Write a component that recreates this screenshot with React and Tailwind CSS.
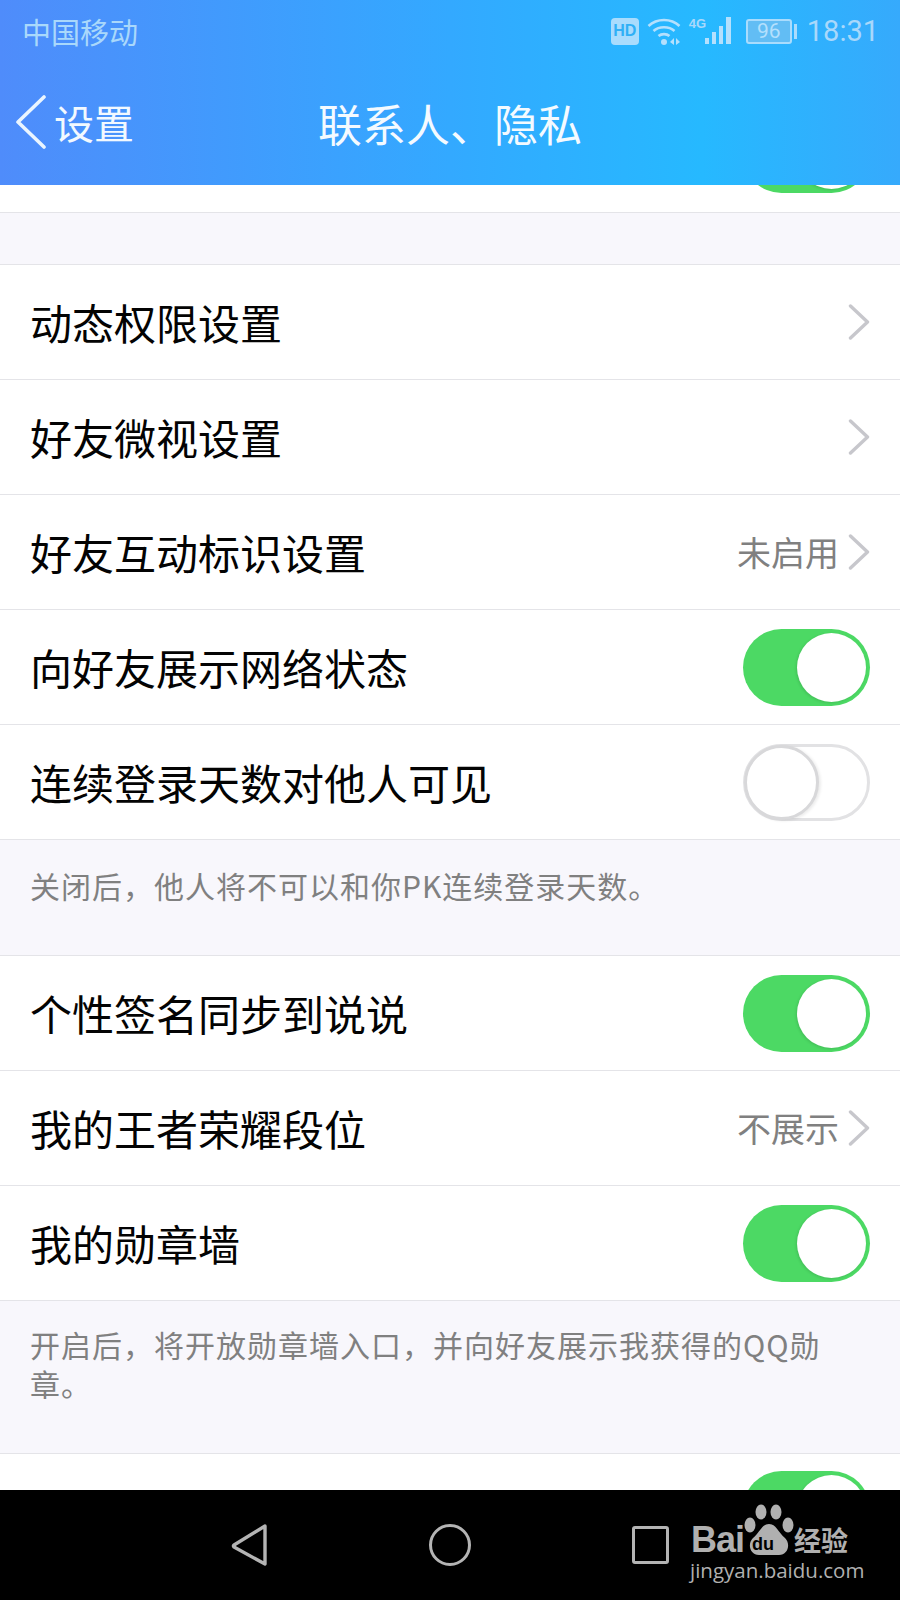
const cjk = { fontFamily: '"Noto Sans CJK SC", "Noto Sans", sans-serif' };

function Toggle({ on = true }) {
  if (!on) {
    return (
      <div className="relative h-[77px] w-[127px] shrink-0 rounded-full border-[3px] border-[#e2e2e4] bg-white">
        <div className="absolute left-[-2px] top-[-2px] h-[75px] w-[75px] rounded-full border-[3px] border-[#d8d8da] bg-white shadow-[2px_1px_3px_rgba(0,0,0,0.08)]"></div>
      </div>
    );
  }
  return (
    <div className="relative h-[77px] w-[127px] shrink-0 rounded-full bg-[#4cd964]">
      <div className="absolute right-[4px] top-[4px] h-[69px] w-[69px] rounded-full bg-white shadow-[-1px_1px_3px_rgba(0,0,0,0.12)]"></div>
    </div>
  );
}

function Chevron() {
  return (
    <svg width="22" height="36" viewBox="0 0 22 36" className="shrink-0" fill="none">
      <path d="M2.5 2 L19.5 18 L2.5 34" stroke="#c7c7cc" strokeWidth="3.4" strokeLinecap="round" strokeLinejoin="round" />
    </svg>
  );
}

function Row({ label, value, toggle, chevron }) {
  return (
    <div className="flex h-[115px] items-center justify-between border-b border-[#e4e4e8] bg-white pl-[30px] pr-[30px]">
      <span className="text-[42px] leading-none text-[#030303]">{label}</span>
      <div className="flex items-center gap-[9px]">
        {value && <span className="text-[34px] leading-none text-[#808080]">{value}</span>}
        {chevron && <Chevron />}
        {toggle === 'on' && <Toggle />}
        {toggle === 'off' && <Toggle on={false} />}
      </div>
    </div>
  );
}

function StatusBar() {
  return (
    <div className="flex h-[62px] items-center justify-between pl-[22px] pr-[21px] text-[#a9d8fb]">
      <span className="text-[29px] leading-none">中国移动</span>
      <div className="flex items-center">
        <div className="flex h-[27px] w-[28px] items-center justify-center rounded-[4px] bg-[#a9dcfd] text-[16px] font-bold leading-none text-[#2fb0f6]" style={{ fontFamily: '"Liberation Sans", sans-serif' }}>HD</div>
        <svg width="34" height="28" viewBox="0 0 34 28" fill="none" className="ml-[8px]">
          <path d="M1.5 9 C10 1 24 1 32.5 9" stroke="#b4e0fd" strokeWidth="2.6" />
          <path d="M6.5 14 C12 9 22 9 27.5 14" stroke="#b4e0fd" strokeWidth="2.6" />
          <path d="M11.5 19 C14.5 16.5 19.5 16.5 22.5 19" stroke="#b4e0fd" strokeWidth="2.6" />
          <circle cx="17" cy="25" r="3" fill="#b4e0fd" />
          <path d="M27 21 L23 25 L27 28 Z M29 21 L33 25 L29 28 Z" fill="#b4e0fd" />
        </svg>
        <div className="relative ml-[8px] h-[28px] w-[46px]">
          <span className="absolute left-0 top-0 text-[13px] font-bold leading-none" style={{ fontFamily: '"Liberation Sans", sans-serif' }}>4G</span>
          <svg width="30" height="28" viewBox="0 0 30 28" className="absolute bottom-0 right-0" fill="#b4e0fd">
            <rect x="0" y="21" width="4" height="6" />
            <rect x="7" y="15" width="4" height="12" />
            <rect x="14" y="9" width="4" height="18" />
            <rect x="21" y="0" width="5" height="27" />
          </svg>
        </div>
        <div className="ml-[11px] flex items-center">
          <div className="flex h-[25px] w-[46px] items-center justify-center rounded-[3px] border-2 border-[#a9dcfd] bg-[#62bdf4] text-[21px] leading-none text-[#b4e0fd]" style={{ fontFamily: 'Roboto, sans-serif' }}>96</div>
          <div className="ml-[2px] h-[15px] w-[3px] bg-[#a9dcfd]"></div>
        </div>
        <span className="ml-[10px] text-[29px] leading-none" style={{ fontFamily: 'Roboto, sans-serif' }}>18:31</span>
      </div>
    </div>
  );
}

function NavBar() {
  return (
    <div className="relative flex h-[110px] shrink-0 bg-black">
      <svg width="38" height="44" viewBox="0 0 38 44" fill="none" className="absolute left-[231px] top-[33px]">
        <path d="M34 3 L3 22 Q2 23 3 24 L34 41 Z" stroke="#b4b4b4" strokeWidth="3.4" strokeLinejoin="round" transform="translate(0 0)" />
      </svg>
      <div className="absolute left-[429px] top-[34px] h-[42px] w-[42px] rounded-full border-[3.5px] border-[#b4b4b4]"></div>
      <div className="absolute left-[632px] top-[36px] h-[38px] w-[37px] rounded-[3px] border-[3.5px] border-[#b4b4b4]"></div>

      {/* watermark */}
      <div className="absolute left-[690px] top-[14px] h-[90px] w-[165px] text-[#b0b0b0]">
        <span className="absolute left-[1px] top-[18px] text-[36px] font-bold leading-[36px] tracking-[-1px]" style={{ fontFamily: '"Liberation Sans", sans-serif' }}>Bai</span>
        <svg width="50" height="52" viewBox="0 0 50 52" className="absolute left-[54px] top-0" fill="#b0b0b0">
          <ellipse cx="6" cy="21" rx="5.5" ry="7.5" />
          <ellipse cx="17" cy="8" rx="5.5" ry="7.5" />
          <ellipse cx="32" cy="8" rx="5.5" ry="7.5" />
          <ellipse cx="44" cy="21" rx="5.5" ry="7.5" />
          <path d="M25 20 C18 20 16 28 9 34 C3 40 6 51 15 51 L35 51 C44 51 47 40 41 34 C34 28 32 20 25 20 Z" />
        </svg>
        <span className="absolute left-[62px] top-[31px] text-[18px] font-bold leading-[18px] text-black" style={{ fontFamily: '"Liberation Sans", sans-serif' }}>du</span>
        <span className="absolute left-[104px] top-[21px] whitespace-nowrap text-[27px] font-bold leading-[30px]" style={cjk}>经验</span>
        <span className="absolute left-0 top-[54px] whitespace-nowrap text-[20.5px] leading-[24px]" style={{ fontFamily: '"Open Sans", sans-serif' }}>jingyan.baidu.com</span>
      </div>
    </div>
  );
}

export default function App() {
  return (
    <div className="flex h-[1600px] w-[900px] flex-col overflow-hidden bg-[#f8f7fc]" style={cjk}>
      {/* Header */}
      <div className="h-[185px] shrink-0 bg-[linear-gradient(90deg,#4f8cfb,#33a9ff_50%,#26b9ff_78%,#36aafc)]">
        <StatusBar />
        <div className="relative flex h-[123px] items-center justify-center pb-[2px]">
          <div className="absolute left-[15px] top-[33px] flex items-center">
            <svg width="32" height="54" viewBox="0 0 32 54" fill="none">
              <path d="M29 2 L3 27 L29 52" stroke="#eaf5ff" strokeWidth="3.6" strokeLinecap="round" strokeLinejoin="round" />
            </svg>
            <span className="ml-[7px] text-[40px] leading-none text-[#f2f9ff]">设置</span>
          </div>
          <span className="text-[44px] leading-none text-[#f4faff]">联系人、隐私</span>
        </div>
      </div>

      {/* Scrolled list */}
      <div className="min-h-0 flex-1 overflow-hidden">
        <div className="flex h-[28px] justify-end overflow-hidden border-b border-[#e4e4e8] bg-white pr-[30px]">
          <div className="mt-[-69px]"><Toggle /></div>
        </div>
        <div className="h-[51px]"></div>
        <div className="border-t border-[#e4e4e8]">
          <Row label="动态权限设置" chevron />
          <Row label="好友微视设置" chevron />
          <Row label="好友互动标识设置" value="未启用" chevron />
          <Row label="向好友展示网络状态" toggle="on" />
          <Row label="连续登录天数对他人可见" toggle="off" />
        </div>
        <div className="h-[115px] pl-[30px] pr-[30px] pt-[26px] text-[30px] leading-[39px] tracking-[1px] text-[#808080]">
          关闭后，他人将不可以和你PK连续登录天数。
        </div>
        <div className="border-t border-[#e4e4e8]">
          <Row label="个性签名同步到说说" toggle="on" />
          <Row label="我的王者荣耀段位" value="不展示" chevron />
          <Row label="我的勋章墙" toggle="on" />
        </div>
        <div className="h-[152px] pl-[30px] pr-[30px] pt-[24px] text-[30px] leading-[39px] tracking-[1px] text-[#808080]">
          开启后，将开放勋章墙入口，并向好友展示我获得的QQ勋章。
        </div>
        <div className="flex h-[60px] items-start justify-end border-t border-[#e4e4e8] bg-white pr-[30px] pt-[17px]">
          <Toggle />
        </div>
      </div>

      <NavBar />
    </div>
  );
}
